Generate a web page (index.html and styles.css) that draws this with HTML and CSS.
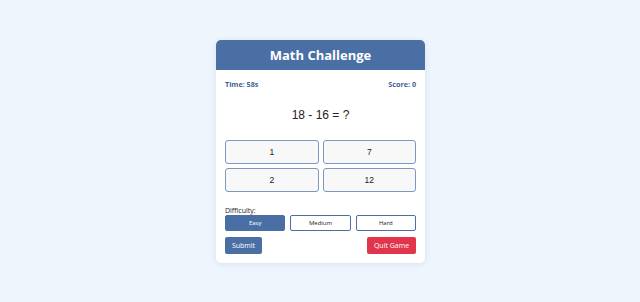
FILE: index.html
```html
<!DOCTYPE html>
<html>
<head>
<meta charset="utf-8">
<link rel="stylesheet" href="styles.css">
</head>
<body>
<div class="card">
  <div class="header"><h1>Math Challenge</h1></div>
  <div class="content">
    <div class="stats"><span>Time: 58s</span><span>Score: 0</span></div>
    <div class="question">18 - 16 = ?</div>
    <div class="answers">
      <button class="answer">1</button>
      <button class="answer">7</button>
      <button class="answer">2</button>
      <button class="answer">12</button>
    </div>
    <div class="difficulty">
      <div class="label">Difficulty:</div>
      <div class="levels">
        <button class="level active">Easy</button>
        <button class="level">Medium</button>
        <button class="level">Hard</button>
      </div>
    </div>
    <div class="actions">
      <button class="submit">Submit</button>
      <button class="quit">Quit Game</button>
    </div>
  </div>
</div>
</body>
</html>
```
FILE: styles.css
```css
html, body { margin: 0; padding: 0; }
body {
  background: #eef5fd;
  font-family: "Open Sans", "Noto Sans", sans-serif;
  width: 640px;
  height: 302px;
  display: flex;
  justify-content: center;
  align-items: flex-start;
}
.card {
  margin-top: 40px;
  margin-left: 1px;
  width: 209px;
  background: #fff;
  border-radius: 5px;
  box-shadow: 0 1px 6px rgba(60, 90, 140, 0.12);
  overflow: hidden;
}
.header {
  background: #4a6fa5;
  height: 30px;
  display: flex;
  align-items: center;
  justify-content: center;
}
.header h1 {
  margin: 0;
  color: #fff;
  font-size: 13px;
  font-weight: 700;
}
.content { padding: 9px 9px 9px; }
.stats {
  display: flex;
  justify-content: space-between;
  font-size: 7.2px;
  font-weight: 700;
  color: #3d5f94;
  line-height: 11px;
}
.question {
  text-align: center;
  font-family: "Liberation Sans", Arial, sans-serif;
  font-size: 12px;
  color: #222;
  margin-top: 18px;
  line-height: 15px;
}
.answers {
  margin-top: 17px;
  display: grid;
  grid-template-columns: 1fr 1fr;
  gap: 4px 4px;
}
button {
  font-family: "Liberation Sans", Arial, sans-serif;
  margin: 0;
  cursor: pointer;
}
.answer {
  height: 24px;
  background: #f8f8f8;
  border: 1px solid #7d97c4;
  border-radius: 3px;
  font-size: 8.5px;
  color: #222;
}
.difficulty { margin-top: 14px; }
.label {
  font-size: 7px;
  color: #222;
  line-height: 9px;
}
.levels {
  display: grid;
  grid-template-columns: 1fr 1fr 1fr;
  gap: 5px;
}
.level {
  height: 16px;
  background: #fff;
  border: 1px solid #4a6fa5;
  border-radius: 2px;
  font-family: "Open Sans", "Noto Sans", sans-serif;
  font-size: 6px;
  color: #222;
}
.level.active {
  background: #4a6fa5;
  color: #fff;
}
.actions {
  margin-top: 6px;
  display: flex;
  justify-content: space-between;
}
.submit, .quit {
  height: 17px;
  border: none;
  border-radius: 2px;
  color: #fff;
  font-family: "Open Sans", "Noto Sans", sans-serif;
  font-size: 7px;
  padding: 0;
}
.submit { background: #4a6fa5; width: 37px; }
.quit { background: #e0354b; width: 49px; }
```
